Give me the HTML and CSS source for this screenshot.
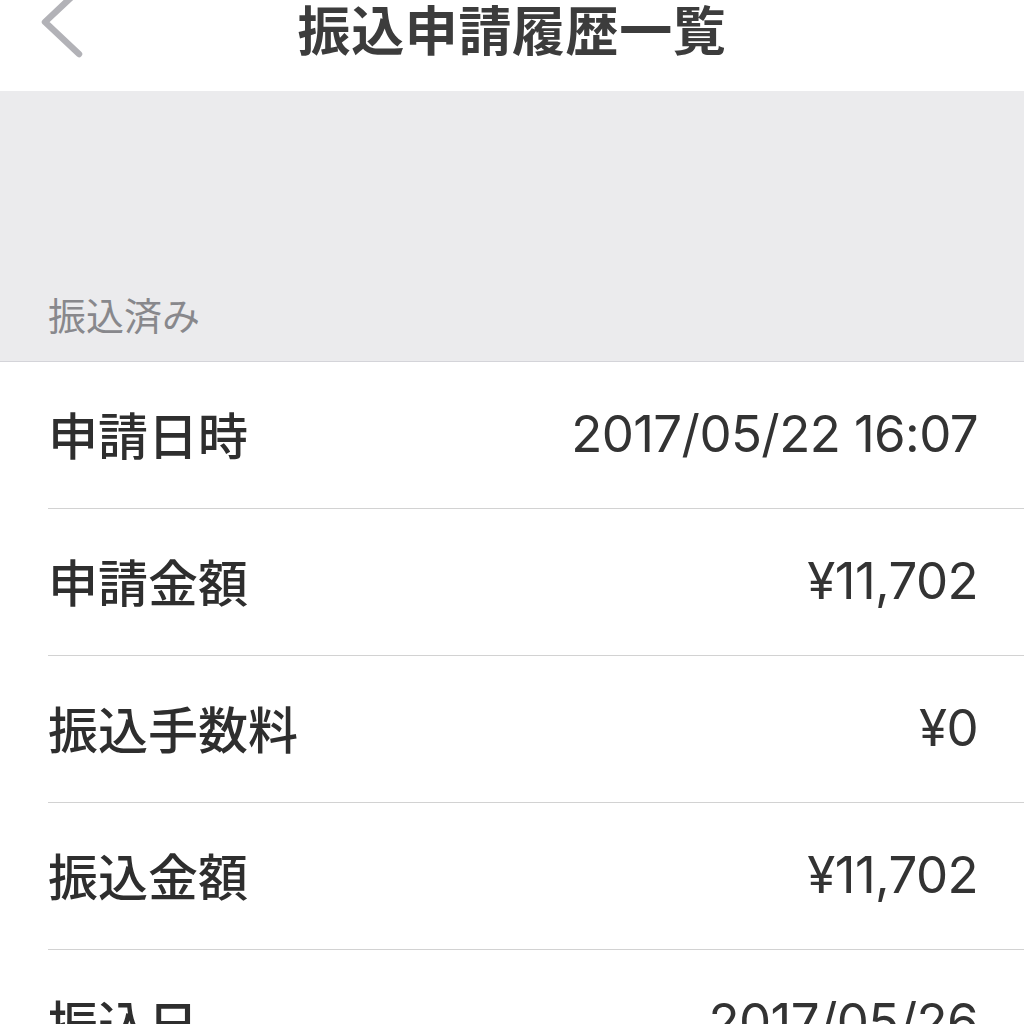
FILE: index.html
```html
<html>
	<head>
		<meta charset="utf-8">
		<title>振込申請履歴一覧</title>
		<meta name="viewport" content="width=device-width, initial-scale=1.0">
		<link rel="stylesheet" href="styles.css">
	</head>
	<body>
		<header class="navbar">
			<a class="back" href="#">
				<svg width="100" height="60" viewBox="0 0 100 60">
					<path d="M79 -10 L45 22 L79 54" fill="none" stroke="#b2b2b7" stroke-width="6.5" stroke-linecap="round" stroke-linejoin="round" />
				</svg>
			</a>
			<h1>振込申請履歴一覧</h1>
			<span></span>
		</header>

		<div class="section-head">振込済み</div>

		<ul class="details">
			<li>
				<span class="label">申請日時</span>
				<span class="value">2017/05/22 16:07</span>
			</li>
			<li>
				<span class="label">申請金額</span>
				<span class="value">¥11,702</span>
			</li>
			<li>
				<span class="label">振込手数料</span>
				<span class="value">¥0</span>
			</li>
			<li>
				<span class="label">振込金額</span>
				<span class="value">¥11,702</span>
			</li>
			<li>
				<span class="label">振込日</span>
				<span class="value">2017/05/26</span>
			</li>
		</ul>
	</body>
</html>
```

FILE: styles.css
```css
body {
	margin: 0;
	background: #fff;
	font-family: "Noto Sans CJK JP", sans-serif;
	color: #333;
	overflow: hidden;
}

.navbar {
	display: grid;
	grid-template-columns: 1fr auto 1fr;
	align-items: start;
	height: 91px;
	background: #fff;
}

.back {
	display: block;
	height: 60px;
}

.navbar h1 {
	margin: 0;
	font-size: 53px;
	line-height: 56px;
	font-weight: bold;
	color: #3c3c3c;
	letter-spacing: 0.6px;
}

.section-head {
	height: 271px;
	box-sizing: border-box;
	padding: 0 0 20px 48px;
	display: flex;
	align-items: flex-end;
	background: #ebebed;
	border-bottom: 1px solid #d4d4d9;
	font-size: 38px;
	color: #88888c;
}

.details {
	list-style: none;
	margin: 0;
	padding: 0;
}

.details li {
	display: flex;
	justify-content: space-between;
	align-items: center;
	height: 146px;
	margin-left: 48px;
	padding-right: 46px;
	border-bottom: 1px solid #d2d2d2;
}

.label {
	font-size: 50px;
	font-weight: 500;
	color: #2e2e2e;
	margin-top: -4px;
}

.value {
	font-family: "Inter", "Noto Sans CJK JP", sans-serif;
	font-size: 51px;
	letter-spacing: -0.6px;
	color: #333;
	margin-top: -4px;
}
```
